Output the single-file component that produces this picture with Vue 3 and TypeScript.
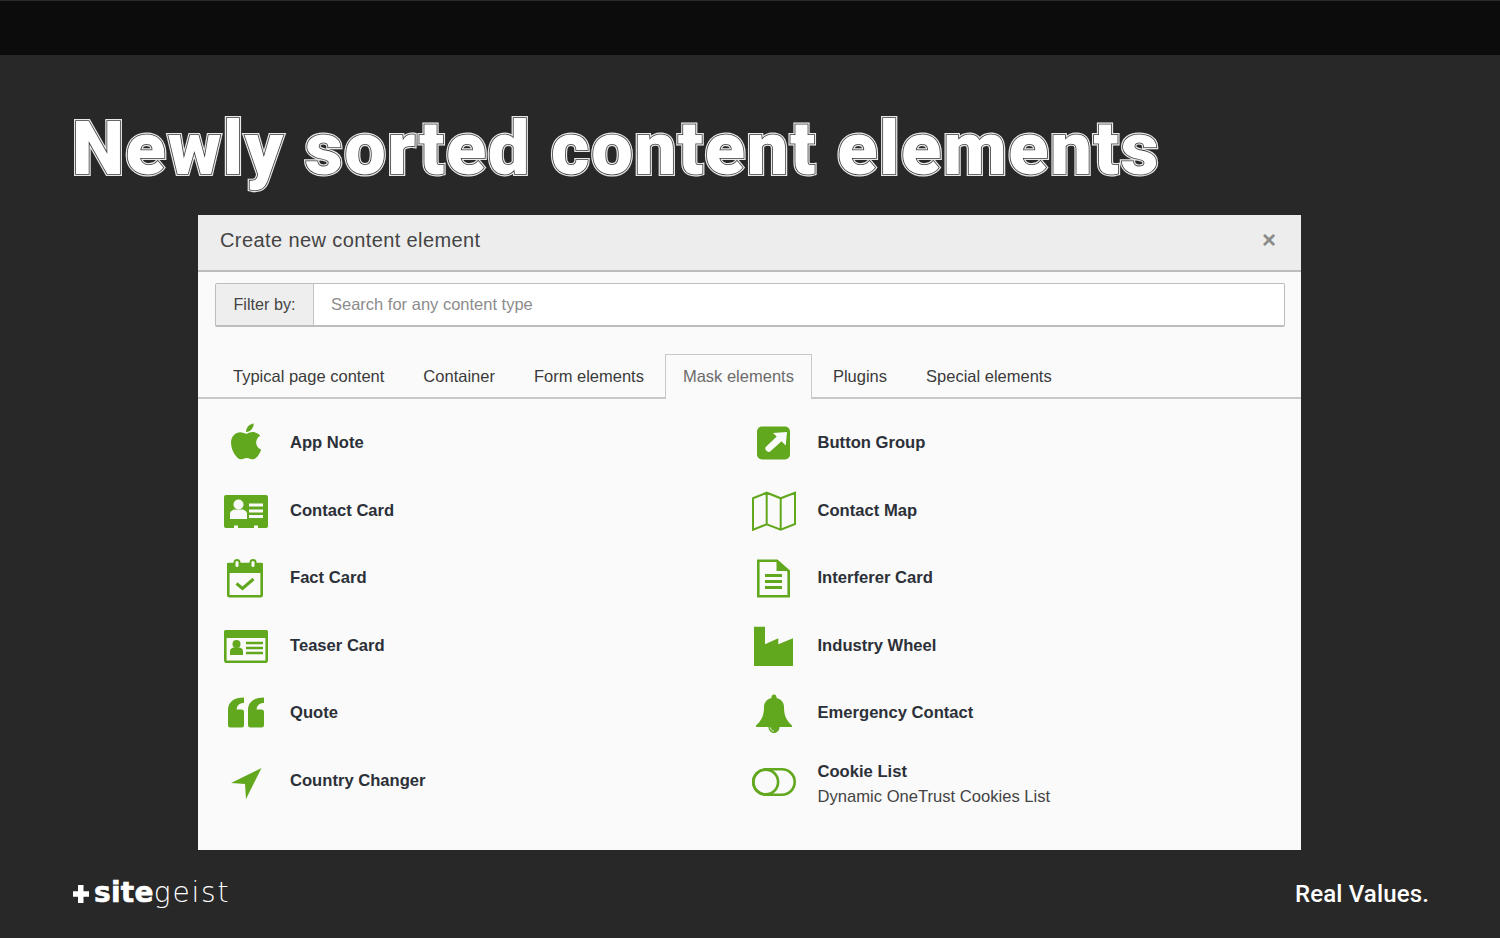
<script setup lang="ts">
interface Item { name: string; icon: string; sub?: string }
const tabs: string[] = ['Typical page content', 'Container', 'Form elements', 'Mask elements', 'Plugins', 'Special elements']
const items: Item[] = [
  { name: 'App Note', icon: 'apple' },
  { name: 'Button Group', icon: 'button' },
  { name: 'Contact Card', icon: 'contact' },
  { name: 'Contact Map', icon: 'map' },
  { name: 'Fact Card', icon: 'fact' },
  { name: 'Interferer Card', icon: 'file' },
  { name: 'Teaser Card', icon: 'teaser' },
  { name: 'Industry Wheel', icon: 'factory' },
  { name: 'Quote', icon: 'quote' },
  { name: 'Emergency Contact', icon: 'bell' },
  { name: 'Country Changer', icon: 'arrow' },
  { name: 'Cookie List', icon: 'toggle', sub: 'Dynamic OneTrust Cookies List' },
]
const title = 'Newly sorted content elements'
</script>

<template>
  <div class="page">
    <div class="topbar"></div>
    <div class="title-wrap">
      <h1 class="title" :data-text="title">{{ title }}</h1>
    </div>
    <section class="modal">
      <header class="modal-head">
        <span class="modal-title">Create new content element</span>
        <span class="close">×</span>
      </header>
      <div class="filter">
        <span class="addon">Filter by:</span>
        <input class="search" type="text" placeholder="Search for any content type" />
      </div>
      <nav class="tabs">
        <a v-for="t in tabs" :key="t" class="tab" :class="{ active: t === 'Mask elements' }">{{ t }}</a>
      </nav>
      <div class="grid">
        <div v-for="it in items" :key="it.name" class="item">
          <svg class="icon" viewBox="0 0 44 44" width="44" height="44">
            <template v-if="it.icon === 'apple'">
              <path transform="translate(6.7 -.06) scale(.08)" d="M318.7 268.7c-.2-36.7 16.4-64.4 50-84.8-18.8-26.9-47.2-41.7-84.7-44.6-35.5-2.8-74.3 20.7-88.5 20.7-15 0-49.4-19.7-76.4-19.7C63.3 141.2 4 184.8 4 273.5q0 39.3 14.4 81.2c12.8 36.7 59 126.7 107.2 125.2 25.2-.6 43-17.9 75.8-17.9 31.8 0 48.3 17.9 76.4 17.9 48.6-.7 90.4-82.5 102.6-119.3-65.2-30.7-61.7-90-61.7-91.9zm-56.6-164.2c27.3-32.4 24.8-61.9 24-72.5-24.1 1.4-52 16.4-67.9 34.9-17.5 19.8-27.8 44.3-25.6 71.9 26.1 2 49.9-11.4 69.5-34.3z" class="g" />
            </template>
            <template v-else-if="it.icon === 'contact'">
              <rect x="0" y="6" width="44" height="33" rx="2" class="g" />
              <path d="M10 39v-2.500h4v2.500zM30 39v-2.500h4v2.500z" class="w" />
              <circle cx="14.500" cy="15.500" r="5" class="w" />
              <path d="M6 30v-5c0-3 3-4.500 5-4.500h7c2 0 5 1.500 5 4.500v5z" class="w" />
              <path d="M25 16h14M25 22h14M25 27.500h14" class="sw" stroke-width="2.800" />
            </template>
            <template v-else-if="it.icon === 'fact'">
              <rect x="4.300" y="8" width="33.400" height="32.300" rx="1" class="ol" stroke-width="2.600" />
              <rect x="3" y="7" width="36" height="10" class="g" />
              <rect x="9.500" y="3" width="7" height="10" rx="3.500" class="g" />
              <rect x="25.500" y="3" width="7" height="10" rx="3.500" class="g" />
              <rect x="11.500" y="5" width="3" height="6" rx="1.500" class="w" />
              <rect x="27.500" y="5" width="3" height="6" rx="1.500" class="w" />
              <path d="M12.500 27.500l6 5 11-9.500" class="ol" stroke-width="3" />
            </template>
            <template v-else-if="it.icon === 'teaser'">
              <rect x="1.300" y="7.300" width="41.400" height="30.400" rx="1.500" class="ol" stroke-width="2.600" />
              <rect x="0" y="6" width="44" height="8" rx="2" class="g" />
              <circle cx="12.500" cy="20" r="4" class="g" />
              <path d="M6 31v-3.500c0-3 2.500-4 4-4h5c1.500 0 4 1 4 4V31z" class="g" />
              <path d="M22 19h17M22 24h17M22 29h17" class="sg" stroke-width="2.400" />
            </template>
            <template v-else-if="it.icon === 'quote'">
              <path d="M20 6.500v5.500c-4.500 0-7.300 2.400-7.300 6.500h4.800a2.500 2.500 0 0 1 2.500 2.500v13a2.500 2.500 0 0 1-2.500 2.500h-11A2.500 2.500 0 0 1 4 34V19C4 11 10 6.500 20 6.500z" class="g" />
              <path transform="translate(20)" d="M20 6.500v5.500c-4.500 0-7.300 2.400-7.300 6.500h4.800a2.500 2.500 0 0 1 2.500 2.500v13a2.500 2.500 0 0 1-2.500 2.500h-11A2.500 2.500 0 0 1 4 34V19C4 11 10 6.500 20 6.500z" class="g" />
            </template>
            <template v-else-if="it.icon === 'arrow'">
              <path d="M37.500 9L22 40l-1-15-14-1z" class="g" />
            </template>
            <template v-else-if="it.icon === 'button'">
              <rect x="5" y="5.500" width="33" height="33" rx="5" class="g" />
              <path d="M21 12l14-1-1.300 13.500-4.200-4.200-11 10c-1 1-2.500 1-3.500 0l-1-1c-1-1-1-2.500 0-3.500l10.700-10.300z" class="w" />
            </template>
            <template v-else-if="it.icon === 'map'">
              <path d="M1 9.300L14.700 3.700 28.700 9.300 43 3.700V35L28.700 40.700 14.700 35.300 1 40.700zM14.700 3.700V35.300M28.700 9.300V40.700" class="ol" stroke-width="2" />
            </template>
            <template v-else-if="it.icon === 'file'">
              <path d="M6.300 4.800H25L36.700 15V40.200H6.300z" class="ol" stroke-width="2.600" />
              <path d="M24.500 4L37.500 15H24.500z" class="g" />
              <path d="M13 19.500h17M13 25.500h17M13 31.500h17" class="sg" stroke-width="3" />
            </template>
            <template v-else-if="it.icon === 'factory'">
              <path d="M2 2.700h11V20.300L26.300 14.300V20.300L41 14.300V42H2z" class="g" />
            </template>
            <template v-else-if="it.icon === 'bell'">
              <path d="M22 3.500c1.500 0 2.500 1 2.500 2.500v1C29 8 32 11.500 32 16c0 8 2 13 8 18.500.5 1 0 1.500-1 1.500H27.500c0 3.500-2.500 6-5.500 6s-5.500-2.500-5.500-6H5c-1 0-1.500-.5-1-1.500C10 29 12 24 12 16c0-4.500 3-8 7.500-9V6c0-1.500 1-2.500 2.500-2.500z" class="g" />
              <path d="M18.500 36.500c0 2.300 1.500 3.500 3.500 3.500" class="sw" stroke-width=".8" />
            </template>
            <template v-else>
              <rect x="1.300" y="10.300" width="41.400" height="25.400" rx="12.700" class="ol" stroke-width="2.600" />
              <circle cx="13.700" cy="23" r="12.400" class="ol" stroke-width="2.600" />
            </template>
          </svg>
          <div class="text" :class="{ 'has-sub': it.sub }">
            <div class="name">{{ it.name }}</div>
            <div v-if="it.sub" class="sub">{{ it.sub }}</div>
          </div>
        </div>
      </div>
    </section>
    <footer class="footer">
      <div class="logo">
        <svg class="plus" viewBox="0 0 16 18" width="16" height="18"><path d="M5 0h5.500v6.200H16v5.600h-5.500V18H5v-6.200H0V6.200h5z" fill="#fff" /></svg>
        <span class="site">site</span><span class="geist">geist</span>
      </div>
      <div class="claim">Real Values.</div>
    </footer>
  </div>
</template>

<style>
html, body { margin: 0; background: #282828; }
</style>

<style scoped>
.page {
  width: 1500px;
  height: 938px;
  background: #282828;
  overflow: hidden;
  display: flex;
  flex-direction: column;
  font-family: "Liberation Sans", Arial, sans-serif;
}
.topbar {
  height: 55px;
  flex: none;
  background: #0c0c0c;
  border-top: 1px solid #2a2a2a;
  box-sizing: border-box;
}
.title-wrap {
  height: 160px;
  flex: none;
  padding-left: 72px;
}
.title {
  position: relative;
  display: inline-block;
  margin: 54px 0 0;
  font-family: Roboto, "Liberation Sans", sans-serif;
  font-weight: 900;
  font-size: 74px;
  line-height: 80px;
  letter-spacing: 1.600px;
  color: #fff;
  -webkit-text-stroke: 4px #e8e8e8;
  white-space: nowrap;
}
.title::after {
  content: attr(data-text);
  position: absolute;
  left: 0;
  top: 0;
  color: #fff;
  -webkit-text-stroke: 1.600px #3a3a3a;
  paint-order: stroke fill;
}
.modal {
  flex: none;
  width: 1103px;
  height: 635px;
  margin-left: 198px;
  background: #fafafa;
  display: flex;
  flex-direction: column;
}
.modal-head {
  height: 57px;
  box-sizing: border-box;
  background: #ededed;
  border-bottom: 2px solid #bdbdbd;
  display: flex;
  align-items: center;
  justify-content: space-between;
  padding: 0 25px 4px 22px;
}
.modal-title {
  font-size: 20px;
  letter-spacing: 0.400px;
  color: #444;
}
.close {
  font-size: 24px;
  font-weight: 700;
  color: #8a8a8a;
  line-height: 1;
  margin-bottom: 2px;
}
.filter {
  display: flex;
  height: 44px;
  box-sizing: border-box;
  margin: 11px 16px 0 17px;
  border: 1px solid #bdbdbd;
  border-bottom-width: 2px;
  border-radius: 2px;
  background: #fff;
}
.addon {
  width: 98px;
  box-sizing: border-box;
  flex: none;
  background: #eee;
  border-right: 1px solid #c4c4c4;
  display: flex;
  align-items: center;
  justify-content: center;
  font-size: 16.200px;
  color: #444;
}
.search {
  flex: 1;
  border: 0;
  outline: 0;
  background: transparent;
  padding: 0 17px;
  font-family: inherit;
  font-size: 16.500px;
  color: #444;
}
.search::placeholder {
  color: #8c8c8c;
  opacity: 1;
}
.tabs {
  display: flex;
  height: 45px;
  box-sizing: border-box;
  margin-top: 27px;
  padding-left: 17px;
  border-bottom: 2px solid #c8c8c8;
  gap: 3px;
}
.tab {
  box-sizing: border-box;
  height: 44px;
  padding: 0 18px;
  display: flex;
  align-items: center;
  font-size: 16.500px;
  color: #3a3a3a;
}
.tab.active {
  height: 45px;
  padding: 0 17px 2px;
  background: #fafafa;
  border: 1px solid #c8c8c8;
  border-bottom: 0;
  color: #6b6b6b;
}
.grid {
  display: grid;
  grid-template-columns: 527.500px 1fr;
  grid-auto-rows: 67.600px;
  padding: 10.300px 0 0 26px;
}
.item {
  display: flex;
  align-items: center;
  gap: 22px;
}
.icon { flex: none; }
.g { fill: #62a81f; }
.w { fill: #fafafa; }
.sw { stroke: #fafafa; fill: none; }
.sg { stroke: #62a81f; fill: none; }
.ol { stroke: #62a81f; fill: none; }
.has-sub { padding-top: 6px; }
.name {
  font-size: 16.600px;
  font-weight: 700;
  color: #2c3038;
}
.sub {
  margin-top: 5px;
  font-size: 16.600px;
  color: #444;
}
.footer {
  flex: 1;
  display: flex;
  align-items: center;
  justify-content: space-between;
  padding: 0 71px 0 73px;
  color: #fff;
}
.logo {
  display: flex;
  align-items: baseline;
  height: 40px;
  padding-top: 2px;
  box-sizing: border-box;
}
.plus { margin: 0 5px 2px 0; align-self: center; }
.site {
  font-family: "DejaVu Sans", sans-serif;
  font-weight: 700;
  font-size: 28px;
  letter-spacing: 0.300px;
  -webkit-text-stroke: 0.600px #fff;
}
.geist {
  font-family: "DejaVu Sans", sans-serif;
  font-weight: 200;
  font-size: 28px;
  letter-spacing: 1.800px;
}
.claim {
  font-family: Roboto, sans-serif;
  font-weight: 500;
  font-size: 24px;
  letter-spacing: 0.150px;
}
</style>
